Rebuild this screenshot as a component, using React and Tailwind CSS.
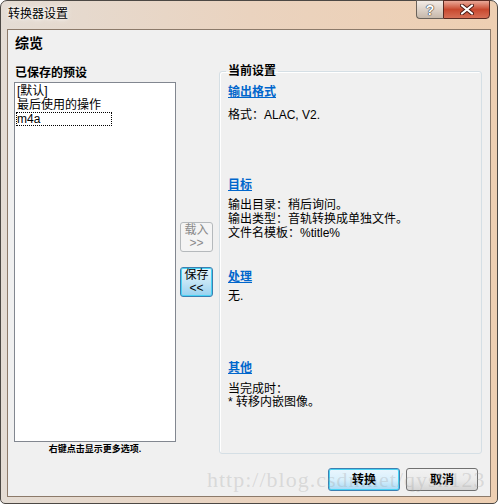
import React from 'react';

const font = "font-['Liberation_Sans','Noto_Sans_CJK_SC',sans-serif]";

function TitleBar() {
  return (
    <div className="h-[28px] flex justify-between items-start">
      <div className="pl-[7px] pt-[6px] text-[12px] leading-[14px] text-black [text-shadow:0_0_6px_#fff,0_0_3px_#fff]">
        转换器设置
      </div>
      <div className="flex -mt-px mr-[7px]">
        <div className="w-[27px] h-[19px] border border-[#6a625a] border-r-0 rounded-bl-[4px] bg-gradient-to-b from-[#f3ece6] via-[#ddd2c8] to-[#c6b8aa] flex items-center justify-center">
          <span className="text-[14px] font-bold leading-[14px] text-white [text-shadow:0_0_1px_#333,0_0_1px_#333,0_0_1px_#333]">?</span>
        </div>
        <div className="w-[47px] h-[19px] border border-[#5a2a22] rounded-br-[4px] bg-gradient-to-b from-[#e9a898] via-[#c8482e] to-[#d66e55] flex items-center justify-center">
          <svg width="14" height="11" viewBox="0 0 14 11">
            <path d="M2 1.5 L12 9.5 M12 1.5 L2 9.5" stroke="#4a1a14" strokeWidth="4" strokeLinecap="round" />
            <path d="M2 1.5 L12 9.5 M12 1.5 L2 9.5" stroke="#ffffff" strokeWidth="2.2" strokeLinecap="round" />
          </svg>
        </div>
      </div>
    </div>
  );
}

function Heading({ children }) {
  return <div className="font-bold text-[#0066cc] underline leading-[14px]">{children}</div>;
}

function SavedPresets() {
  return (
    <div className="ml-[6px] w-[162px] flex flex-col">
      <div className="h-[18px] leading-[18px] pl-[1px] font-bold">已保存的预设</div>
      <div className="h-[360px] border border-[#828790] bg-white pt-[1px] pl-[1px] leading-[14px]">
        <div className="pl-[1px]">[默认]</div>
        <div className="pl-[1px]">最后使用的操作</div>
        <div className="w-[96px] h-[14px] border border-dotted border-black leading-[12px]">m4a</div>
      </div>
      <div className="text-center text-[9px] font-bold leading-[12px] mt-[1px]">右键点击显示更多选项.</div>
    </div>
  );
}

function MoveButtons() {
  return (
    <div className="ml-[4px] w-[33px] pt-[158px] flex flex-col">
      <div className="h-[30px] border border-[#b5b9bc] rounded-[3px] bg-[#f4f4f4] text-[#8a8a8a] text-center leading-[13px] pt-[1px]">
        <div>载入</div>
        <div>&gt;&gt;</div>
      </div>
      <div className="mt-[15px] h-[30px] border border-[#3c7fb1] rounded-[3px] bg-gradient-to-b from-[#e6f5fc] via-[#c4e5f6] to-[#98d1ef] shadow-[inset_0_0_0_1px_#48d3f4] text-center leading-[13px] pt-[1px]">
        <div>保存</div>
        <div>&lt;&lt;</div>
      </div>
    </div>
  );
}

function CurrentSettings() {
  return (
    <fieldset className="ml-[6px] w-[263px] h-[390px] border border-[#d5dfe5] rounded-[3px] pl-[6px] shadow-[inset_1px_1px_0_#fff]">
      <legend className="px-[2px] font-bold leading-[14px]">当前设置</legend>
      <div className="pl-[2px] leading-[14px]">
        <div className="mt-[7px]"><Heading>输出格式</Heading></div>
        <div className="mt-[9px]">格式：ALAC, V2.</div>
        <div className="mt-[56px]"><Heading>目标</Heading></div>
        <div className="mt-[6px]">输出目录：稍后询问。</div>
        <div>输出类型：音轨转换成单独文件。</div>
        <div>文件名模板：%title%</div>
        <div className="mt-[30px]"><Heading>处理</Heading></div>
        <div className="mt-[5px]">无.</div>
        <div className="mt-[58px]"><Heading>其他</Heading></div>
        <div className="mt-[8px] leading-[13px]">当完成时：</div>
        <div className="leading-[13px]">* 转移内嵌图像。</div>
      </div>
    </fieldset>
  );
}

export default function App() {
  return (
    <div className={`w-[498px] h-[504px] overflow-hidden bg-white ${font} text-[12px] text-black`}>
      <div className="relative w-[498px] h-[504px] rounded-t-[7px] rounded-b-[5px] border border-[#4c4844] bg-gradient-to-r from-[#e4dcd4] via-[#ead3bf] to-[#eecfb2] flex flex-col">
        <TitleBar />
        <div className="mx-[6px] h-[468px] border border-[#8c7a6a] bg-[#f0f0f0] flex flex-col">
          <div className="pl-[7px] mt-[5px] text-[14px] font-bold leading-[16px]">综览</div>
          <div className="mt-[13px] flex items-start">
            <SavedPresets />
            <MoveButtons />
            <CurrentSettings />
          </div>
          <div className="mt-[13px] flex justify-end gap-[6px] pr-[12px]">
            <button className="w-[72px] h-[23px] border border-[#3c7fb1] rounded-[3px] bg-gradient-to-b from-[#eaf6fd] via-[#d9f0fc] to-[#a7d9f5] shadow-[inset_0_0_0_1px_#48d3f4] font-bold leading-[14px]">
              转换
            </button>
            <button className="w-[72px] h-[23px] border border-[#707070] rounded-[3px] bg-gradient-to-b from-[#f2f2f2] via-[#ebebeb] to-[#d5d5d5] font-bold leading-[14px]">
              取消
            </button>
          </div>
        </div>
        <div className="absolute left-[206px] top-[466px] font-['Liberation_Serif',serif] text-[22px] leading-[26px] tracking-[1px] text-[#a0a0a0]/30 pointer-events-none">
          http://blog.csdn.net/qysh123
        </div>
      </div>
    </div>
  );
}
